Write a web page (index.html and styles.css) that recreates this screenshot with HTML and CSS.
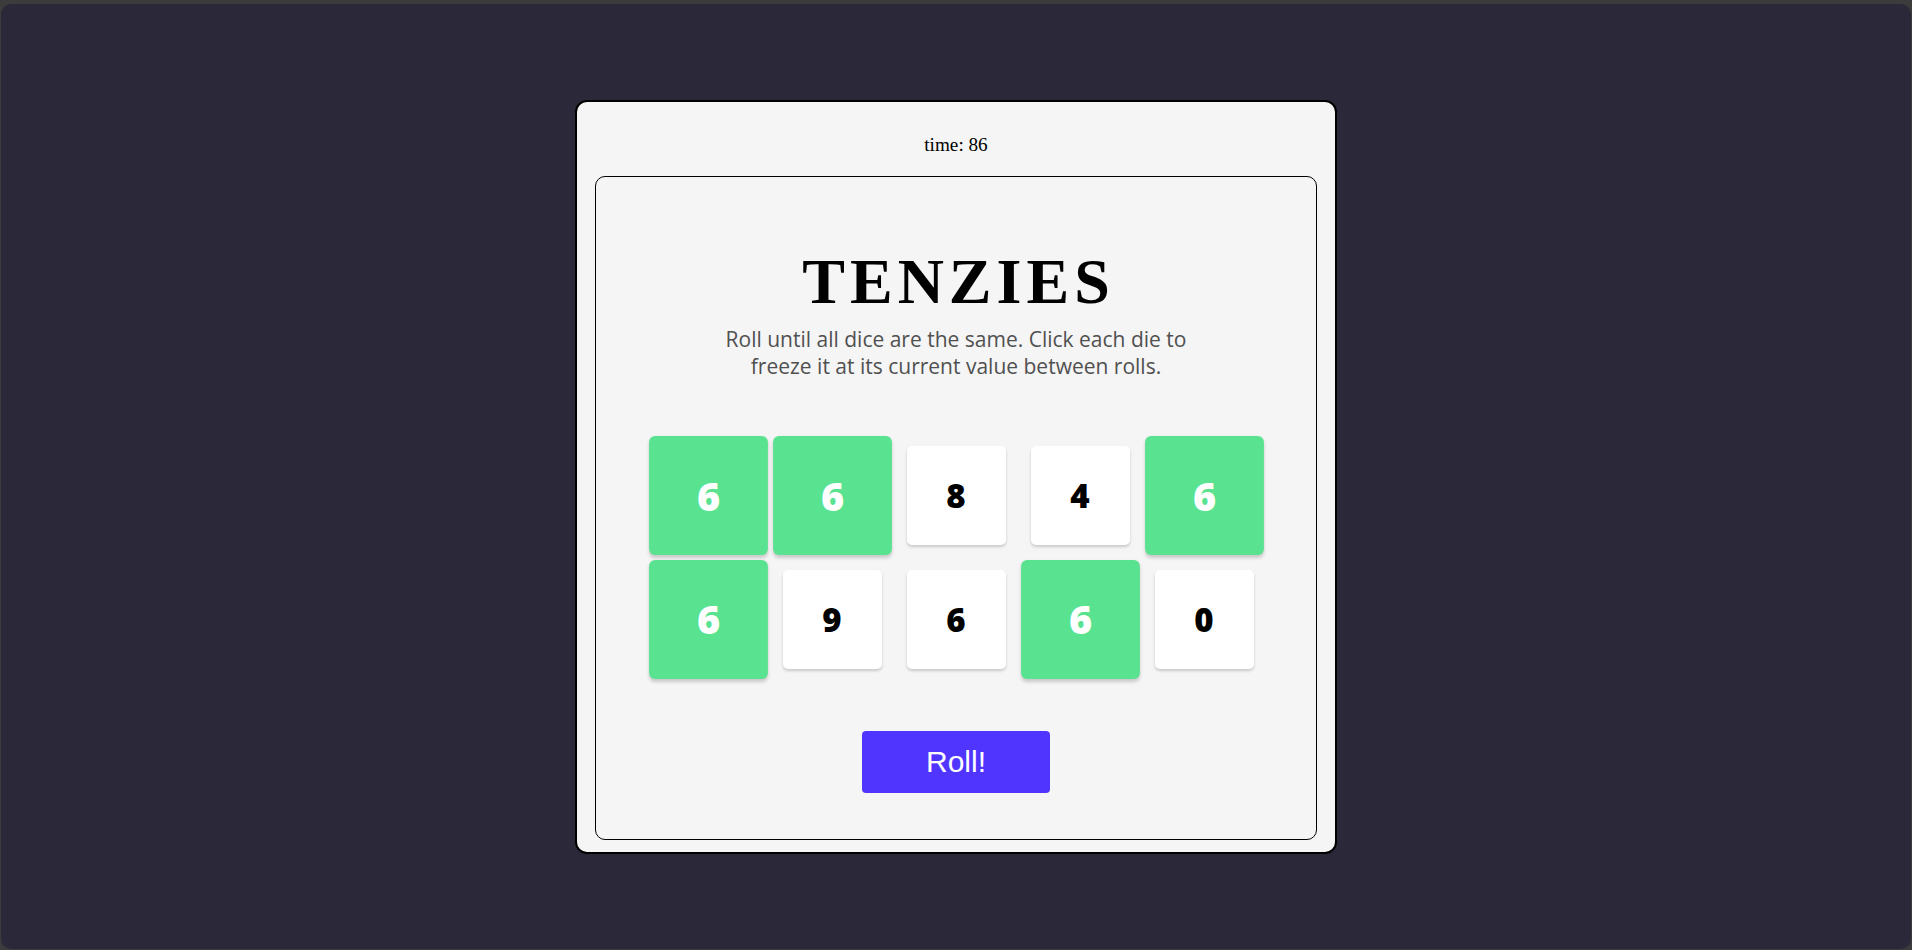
FILE: index.html
```html
<!DOCTYPE html>
<html lang="en">
<head>
<meta charset="utf-8">
<title>Tenzies</title>
<link rel="stylesheet" href="styles.css">
</head>
<body>
<div class="screen">
  <div class="card">
    <p class="timer">time: 86</p>
    <main class="board">
      <h1 class="title">TENZIES</h1>
      <p class="instructions">Roll until all dice are the same. Click each die to freeze it at its current value between rolls.</p>
      <div class="dice">
        <button class="die held">6</button>
        <button class="die held">6</button>
        <button class="die">8</button>
        <button class="die">4</button>
        <button class="die held">6</button>
        <button class="die held">6</button>
        <button class="die">9</button>
        <button class="die">6</button>
        <button class="die held">6</button>
        <button class="die">0</button>
      </div>
      <button class="roll">Roll!</button>
    </main>
  </div>
</div>
</body>
</html>
```

FILE: styles.css
```css
* { box-sizing: border-box; }
html { background: #3c3c3c; height: 100%; }
body {
  margin: 0;
  padding: 4px 1px 1px 1px;
  height: 100%;
}
.screen {
  height: 100%;
  background: #2b283a;
  border-radius: 10px;
  display: flex;
  align-items: center;
  justify-content: center;
}
.card {
  width: 762px;
  background: #f5f5f5;
  border: 2px solid #000;
  border-radius: 12px;
  padding: 0 18px 12px 18px;
  display: flex;
  flex-direction: column;
  align-items: center;
}
.timer {
  margin: 32px 0 20px 0;
  font-family: "Liberation Serif", "Times New Roman", serif;
  font-size: 19.2px;
  color: #000;
}
.board {
  width: 100%;
  border: 1px solid #000;
  border-radius: 10px;
  display: flex;
  flex-direction: column;
  align-items: center;
  padding: 0 0 46px 0;
}
.title {
  margin: 68px 0 7px 0;
  font-family: "Liberation Serif", "Times New Roman", serif;
  font-weight: bold;
  font-size: 64px;
  letter-spacing: 5px;
  padding-left: 5px;
  color: #000;
}
.instructions {
  margin: 0 0 66px 0;
  width: 500px;
  text-align: center;
  font-family: "Open Sans", "DejaVu Sans", sans-serif;
  font-size: 21px;
  line-height: 27px;
  color: #505050;
}
.dice {
  display: grid;
  grid-template-columns: repeat(5, 99px);
  grid-auto-rows: 99px;
  gap: 25px;
}
.die {
  border: none;
  border-radius: 5px;
  background: #fff;
  box-shadow: 0 2px 3px rgba(0, 0, 0, 0.18);
  font-family: "Open Sans", "Liberation Sans", sans-serif;
  font-weight: 800;
  font-size: 33px;
  color: #000;
  padding: 0;
  cursor: pointer;
}
.die.held {
  background: #59e391;
  color: #fff;
  transform: scale(1.2);
}
.roll {
  margin-top: 62px;
  width: 188px;
  height: 62px;
  border: none;
  border-radius: 4px;
  background: #5035ff;
  color: #fff;
  font-family: "Liberation Sans", Arial, sans-serif;
  font-size: 30px;
  cursor: pointer;
}
```
